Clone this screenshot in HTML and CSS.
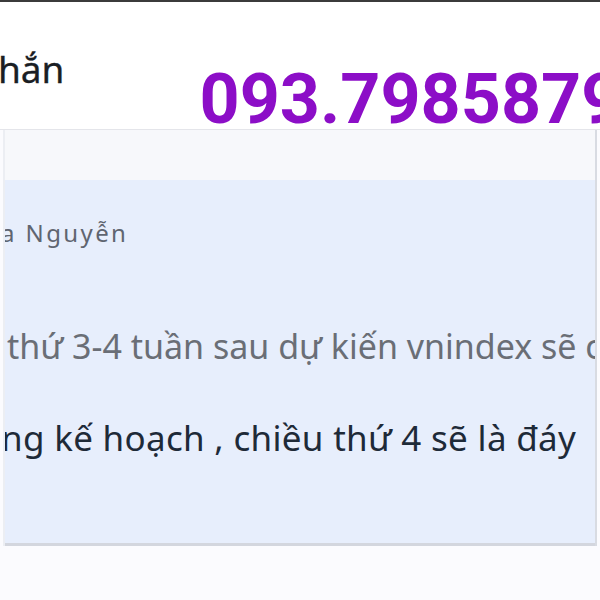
FILE: index.html
```html
<!DOCTYPE html>
<html lang="vi">
<head>
    <meta charset="UTF-8">
    <meta name="viewport" content="width=device-width, initial-scale=1.0">
    <title>Bình luận</title>
    <link rel="stylesheet" href="styles.css">
</head>
<body>
    <div class="topbar"></div>

    <div class="header">
        <h1 class="title">hắn</h1>
        <div class="phone">093.7985879</div>
    </div>

    <div class="thread">
        <div class="comment">
            <p class="author">a Nguyễn</p>
            <p class="quote">thứ 3-4 tuần sau dự kiến vnindex sẽ có</p>
            <p class="reply">ng kế hoạch , chiều thứ 4 sẽ là đáy</p>
        </div>
    </div>
</body>
</html>
```

FILE: styles.css
```css
body {
    margin: 0;
    background-color: #fbfbfe;
    font-family: "Noto Sans", "Open Sans", sans-serif;
    width: 600px;
    height: 600px;
    overflow: hidden;
}
.topbar {
    height: 2px;
    background-color: #3b3b3b;
}
.header {
    display: flex;
    align-items: flex-start;
    height: 127px;
    background: white;
    border-bottom: 1px solid #e4e5ea;
    white-space: nowrap;
    overflow: hidden;
}
.title {
    margin: 48px 0 0 -2px;
    font-size: 37px;
    font-weight: 400;
    line-height: 37px;
    color: #1a1e24;
    -webkit-text-stroke: 0.3px #1a1e24;
}
.phone {
    margin: 62px 0 0 135px;
    font-family: Roboto, "Liberation Sans", sans-serif;
    font-size: 70px;
    font-weight: 700;
    line-height: 70px;
    color: #8c0ec7;
}
.thread {
    background-color: #f7f8fb;
    border-left: 2px solid #eceef3;
    margin-left: 3px;
    border-right: 2px solid #d8dbe2;
    margin-right: 3px;
    padding-top: 50px;
}
.comment {
    background-color: #e7eefc;
    height: 362px;
    border-bottom: 3px solid #d3d6de;
    padding-top: 1px;
    white-space: nowrap;
    overflow: hidden;
}
.author {
    margin: 38px 0 0 -4px;
    font-size: 24px;
    line-height: 28px;
    letter-spacing: 2.4px;
    color: #5f6570;
}
.quote {
    margin: 79px 0 0 2px;
    font-size: 34px;
    line-height: 40px;
    color: #6a6e76;
}
.reply {
    margin: 50px 0 0 -4px;
    font-size: 35px;
    line-height: 44px;
    letter-spacing: 0.3px;
    color: #1e2a38;
}
```
